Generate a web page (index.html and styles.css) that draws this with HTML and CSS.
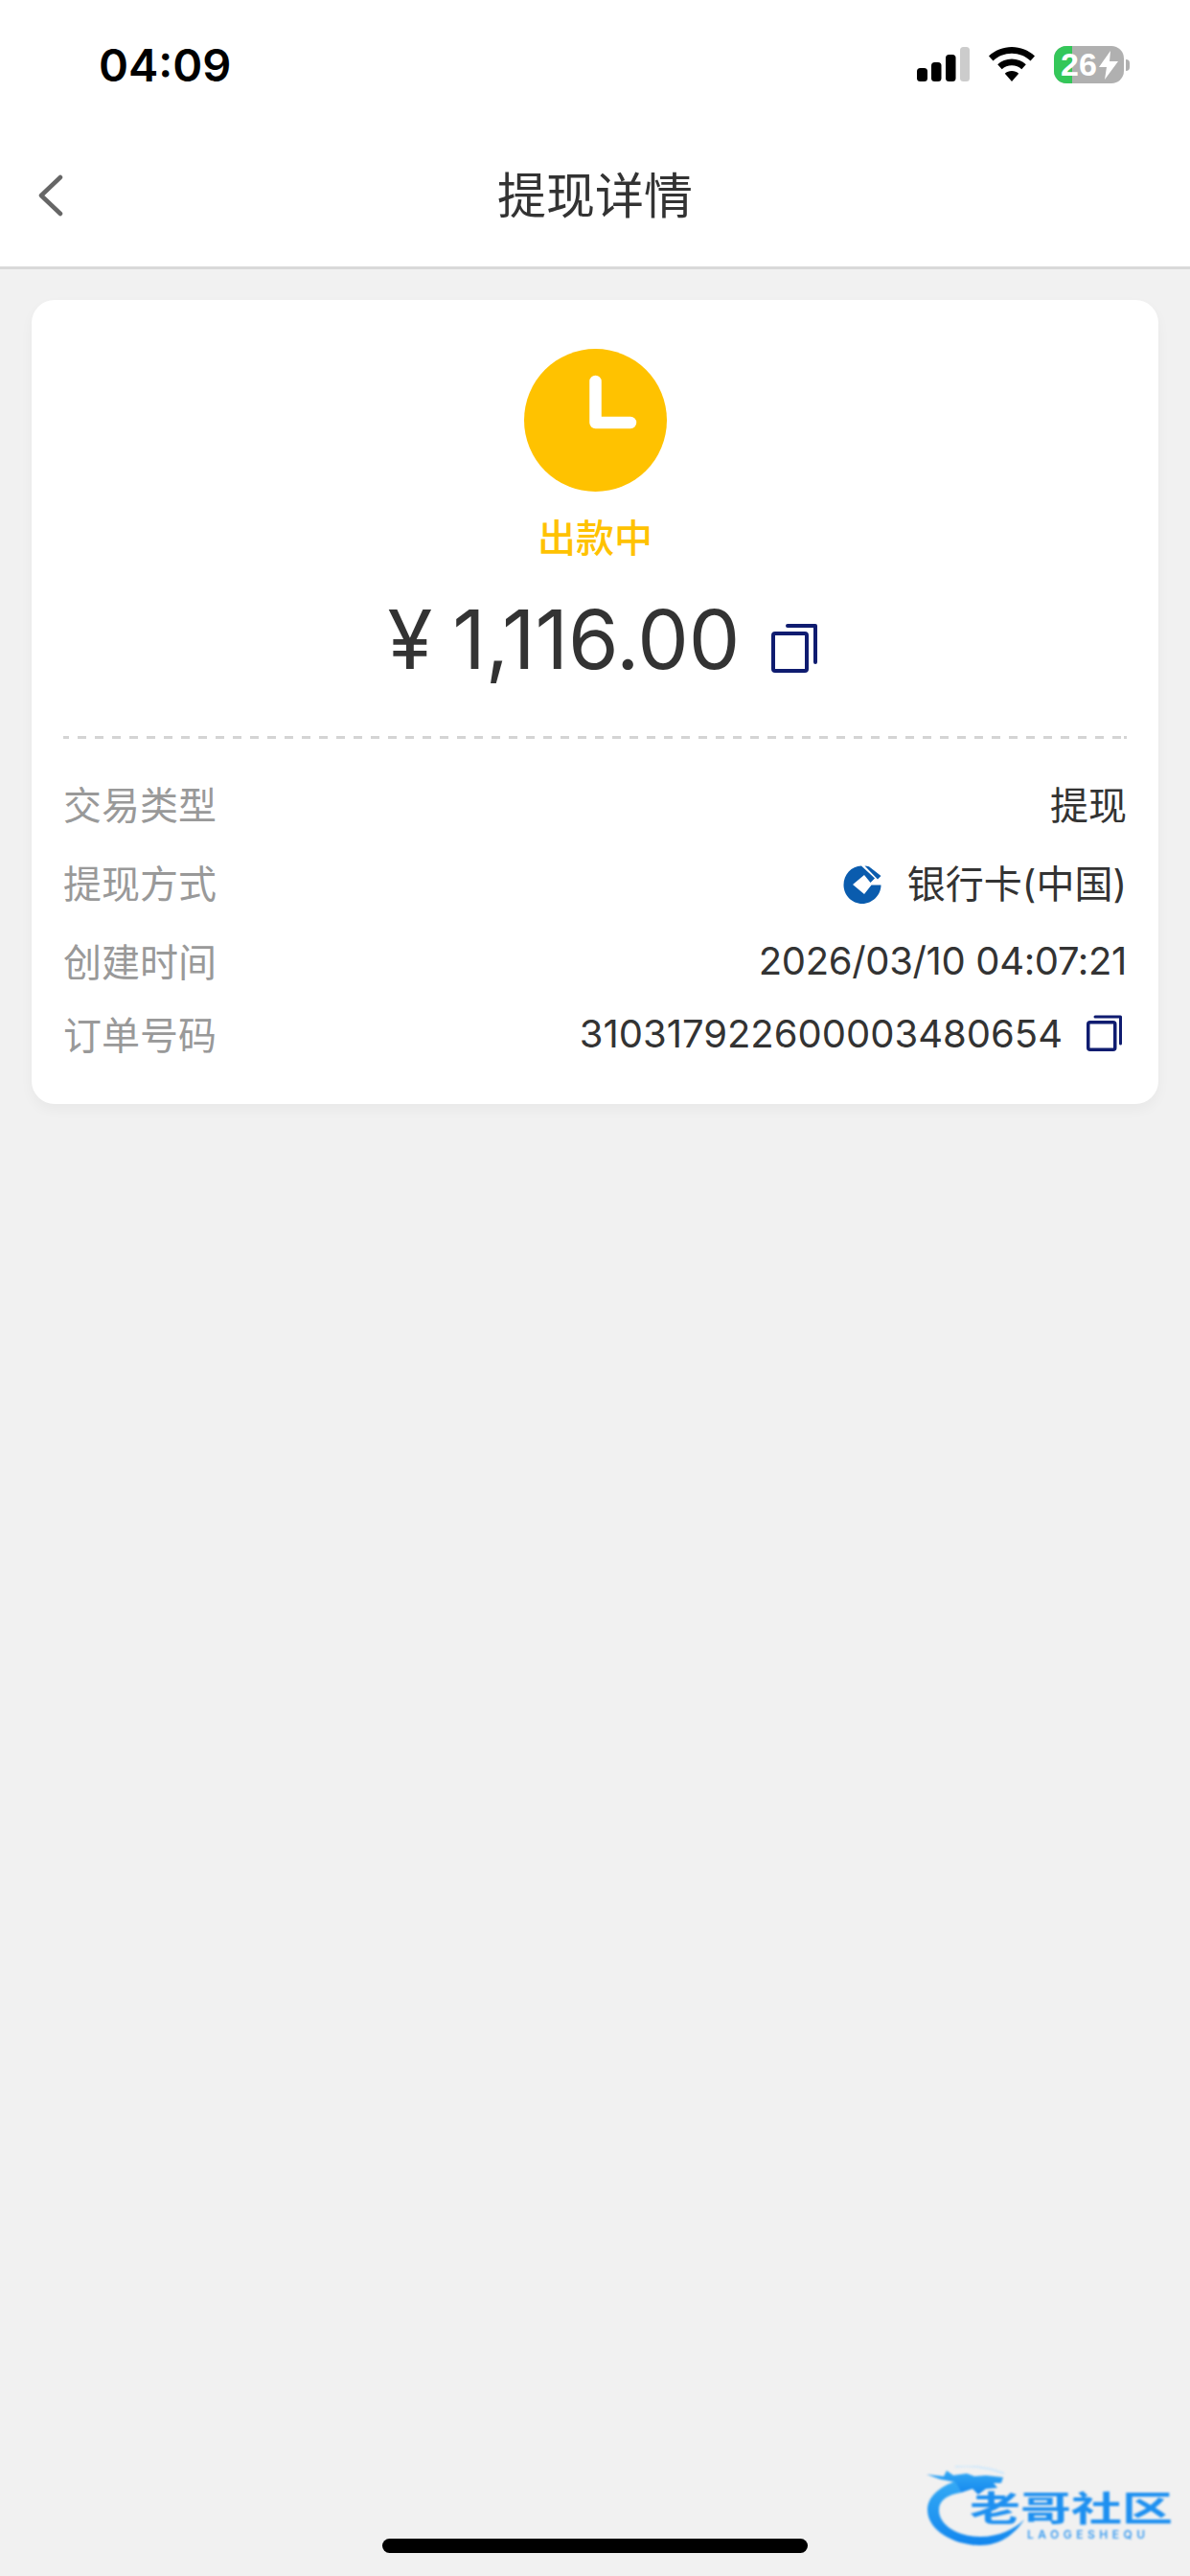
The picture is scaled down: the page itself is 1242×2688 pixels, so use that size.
FILE: index.html
```html
<!DOCTYPE html>
<html lang="zh-CN">
<head>
<meta charset="utf-8">
<title>提现详情</title>
<link rel="stylesheet" href="styles.css">
</head>
<body>
<div class="page">
  <header class="top">
    <div class="status">
      <span class="time">04:09</span>
      <div class="status-icons">
        <svg class="signal" width="55" height="36" viewBox="0 0 55 36"><rect x="0" y="22" width="11" height="14" rx="3.500" fill="#000"/><rect x="15" y="16" width="10.500" height="20" rx="3.500" fill="#000"/><rect x="30" y="8" width="10.500" height="28" rx="3.500" fill="#000"/><rect x="45" y="0" width="10" height="36" rx="3.500" fill="#ccc"/></svg>
        <svg class="wifi" width="48" height="36" viewBox="0 0 48 36"><path d="M24 0C33 0 41.500 3.500 48 9.500L43.500 14.500C38.300 9.600 31.400 6.800 24 6.800S9.700 9.600 4.500 14.500L0 9.500C6.500 3.500 15 0 24 0Z" fill="#000"/><path d="M24 12.500C29.700 12.500 34.900 14.700 38.800 18.300L34.300 23.200C31.600 20.700 28 19.200 24 19.200S16.400 20.700 13.700 23.200L9.200 18.300C13.100 14.700 18.300 12.500 24 12.500Z" fill="#000"/><path d="M24 25C26.800 25 29.300 26 31.200 27.800L24 36L16.800 27.800C18.700 26 21.200 25 24 25Z" fill="#000"/></svg>
        <div class="battery">
          <div class="battery-body">
            <div class="battery-fill"></div>
            <span class="battery-text">26</span>
            <svg class="bolt" width="20" height="30" viewBox="0 0 20 30"><path d="M12 0L0 17H8L6 30L20 11H11Z" fill="#fff"/></svg>
          </div>
          <div class="battery-nub"></div>
        </div>
      </div>
    </div>
    <nav class="nav">
      <svg class="back" width="28" height="44" viewBox="0 0 28 44"><path d="M25 3L5 22L25 41" fill="none" stroke="#666" stroke-width="4.500" stroke-linecap="round" stroke-linejoin="round"/></svg>
      <h1 class="title">提现详情</h1>
    </nav>
  </header>

  <main class="content">
    <section class="card">
      <div class="summary">
        <svg class="clock" width="149" height="149" viewBox="0 0 149 149"><circle cx="74.500" cy="74.500" r="74.500" fill="#ffc200"/><path d="M74.500 34V77H111" fill="none" stroke="#fff" stroke-width="12.500" stroke-linecap="round" stroke-linejoin="round"/></svg>
        <div class="state">出款中</div>
        <div class="amount-row">
          <span class="amount">¥ 1,116.00</span>
          <svg class="copy-lg" width="48" height="52" viewBox="0 0 48 52"><rect x="2" y="11" width="35" height="39" rx="2" fill="none" stroke="#0f1c70" stroke-width="4"/><path d="M17 3H46V41" fill="none" stroke="#0f1c70" stroke-width="4" stroke-linecap="round" stroke-linejoin="round"/></svg>
        </div>
      </div>
      <div class="divider"></div>
      <div class="details">
        <div class="row">
          <span class="label">交易类型</span>
          <span class="value">提现</span>
        </div>
        <div class="row">
          <span class="label">提现方式</span>
          <span class="value bank">
            <svg class="ccb" width="40" height="40" viewBox="0 0 40 40"><path d="M19 0.500L33 13.500L28.500 18L22 10L10 20L22 30L29.500 20.500H39.500C39.500 31 30.500 40 20 40C9 40 0.500 31 0.500 20.500C0.500 9.500 8.500 0.800 19 0.500Z" fill="#0a5cae"/><path d="M22.500 0.500C24 0.500 25.500 0.800 27 1.300L39.500 11L36 14.500Z" fill="#0a5cae"/></svg>
            <span>银行卡(中国)</span>
          </span>
        </div>
        <div class="row">
          <span class="label">创建时间</span>
          <span class="value date">2026/03/10 04:07:21</span>
        </div>
        <div class="row row-last">
          <span class="label">订单号码</span>
          <span class="value order">
            <span>310317922600003480654</span>
            <svg class="copy-sm" width="38" height="38" viewBox="0 0 38 38"><rect x="1.750" y="7.750" width="28" height="28.500" rx="2" fill="none" stroke="#0f1c70" stroke-width="3.500"/><path d="M9 2H35.500V30" fill="none" stroke="#0f1c70" stroke-width="3" stroke-linecap="round" stroke-linejoin="round"/></svg>
          </span>
        </div>
      </div>
    </section>
  </main>

  <div class="watermark">
    <svg class="dragon" width="104" height="86" viewBox="0 0 104 86">
      <defs><linearGradient id="wmfill" x1="0" y1="0" x2="0" y2="1"><stop offset="0" stop-color="#35aaf5"/><stop offset="1" stop-color="#1286ee"/></linearGradient></defs>
      <path d="M30 16C14 22 1 32 1 46C1 68 30 83 56 83C76 83 92 72 102 56C92 66 76 74 56 74C36 74 13 64 13 46C13 36 22 30 36 28Z" fill="url(#wmfill)"/>
      <path d="M0 9L18 11L21 5L28 10L42 8L50 11L62 10L80 12L78 18L70 18L74 23L62 24L54 30L48 24L36 28L30 17L14 14Z" fill="url(#wmfill)"/>
      <path d="M30 1C46 -1 66 2 81 8" fill="none" stroke="#cfe8fb" stroke-width="2"/>
    </svg>
    <div class="wm-name">老哥社区</div>
    <div class="wm-sub">LAOGESHEQU</div>
  </div>

  <div class="home-bar"></div>
</div>
</body>
</html>
```
FILE: styles.css
```css
* { box-sizing: border-box; margin: 0; padding: 0; }
html, body { width: 1242px; height: 2688px; overflow: hidden; }
body {
  background: #f1f1f1;
  font-family: Inter, "Noto Sans CJK SC", sans-serif;
  color: #333;
}
.page { position: relative; width: 1242px; height: 2688px; }
.top {
  height: 281px;
  background: #fff;
  border-bottom: 3px solid #d9d9d9;
}
.status {
  height: 132px;
  display: flex;
  align-items: flex-start;
  justify-content: space-between;
  padding: 40px 63px 0 103px;
}
.time {
  font-size: 47px;
  line-height: 56px;
  font-weight: 600;
  color: #000;
}
.status-icons {
  display: flex;
  align-items: flex-start;
  gap: 20px;
  padding-top: 9px;
}
.battery { display: flex; align-items: center; gap: 2px; margin-top: -1px; }
.battery-body {
  position: relative;
  width: 73px;
  height: 39px;
  border-radius: 13px;
  background: #b0b0b0;
  overflow: hidden;
  display: flex;
  align-items: center;
  padding-left: 7px;
  gap: 2px;
}
.battery-fill { position: absolute; left: 0; top: 0; bottom: 0; width: 19px; background: #34c759; }
.battery-text { position: relative; color: #fff; font-size: 34px; line-height: 39px; font-weight: 700; font-family: "Liberation Sans", sans-serif; }
.bolt { position: relative; flex: none; }
.battery-nub { width: 4px; height: 12px; background: #b0b0b0; border-radius: 0 4px 4px 0; }
.nav {
  position: relative;
  height: 146px;
  display: flex;
  align-items: center;
  justify-content: center;
}
.back { position: absolute; left: 38px; top: 50px; }
.title { font-size: 51px; line-height: 60px; font-weight: 400; color: #333; }
.content { padding: 32px 33px 0; }
.card {
  height: 839px;
  background: #fff;
  border-radius: 24px;
  padding: 51px 33px 0;
  box-shadow: 0 6px 14px rgba(0, 0, 0, 0.04);
}
.summary {
  height: 404px;
  display: flex;
  flex-direction: column;
  align-items: center;
}
.clock { display: block; flex: none; }
.state { margin-top: 26px; font-size: 40px; line-height: 46px; font-weight: 500; color: #ffc200; }
.amount-row { display: flex; align-items: center; gap: 33px; margin-top: 35px; height: 96px; padding-left: 16px; }
.amount { font-size: 85px; line-height: 96px; font-weight: 400; color: #333; word-spacing: -3px; }
.copy-lg { margin-top: 15px; }
.divider {
  height: 3px;
  background: repeating-linear-gradient(90deg, #d4d4d4 0, #d4d4d4 9px, transparent 9px, transparent 18px);
  background-position: -3px 0;
}
.details { padding-top: 26px; display: flex; flex-direction: column; }
.row {
  height: 82px;
  display: flex;
  align-items: center;
  justify-content: space-between;
  font-size: 40px;
}
.row-last { height: 72px; margin-top: -1px; }
.label { color: #999; }
.value { color: #333; display: flex; align-items: center; }
.date { letter-spacing: -0.350px; }
.bank { gap: 27px; }
.ccb { margin-top: 5px; }
.order { gap: 25px; padding-right: 4px; }
.ccb, .copy-sm { flex: none; }
.watermark {
  position: absolute;
  left: 967px;
  top: 2573px;
  width: 256px;
  height: 84px;
  filter: blur(0.8px);
}
.dragon { position: absolute; left: 0; top: 0; }
.wm-name {
  position: absolute;
  left: 45px;
  top: 27px;
  font-size: 53px;
  line-height: 52px;
  font-weight: 700;
  color: #1e90f0;
  white-space: nowrap;
  transform: scaleY(0.68);
  transform-origin: left top;
}
.wm-sub {
  position: absolute;
  left: 105px;
  top: 65px;
  font-size: 12px;
  line-height: 14px;
  font-weight: 600;
  letter-spacing: 4.500px;
  color: #3b9cf0;
  white-space: nowrap;
}
.home-bar {
  position: absolute;
  left: 399px;
  top: 2649px;
  width: 444px;
  height: 15px;
  border-radius: 8px;
  background: #000;
}
```
